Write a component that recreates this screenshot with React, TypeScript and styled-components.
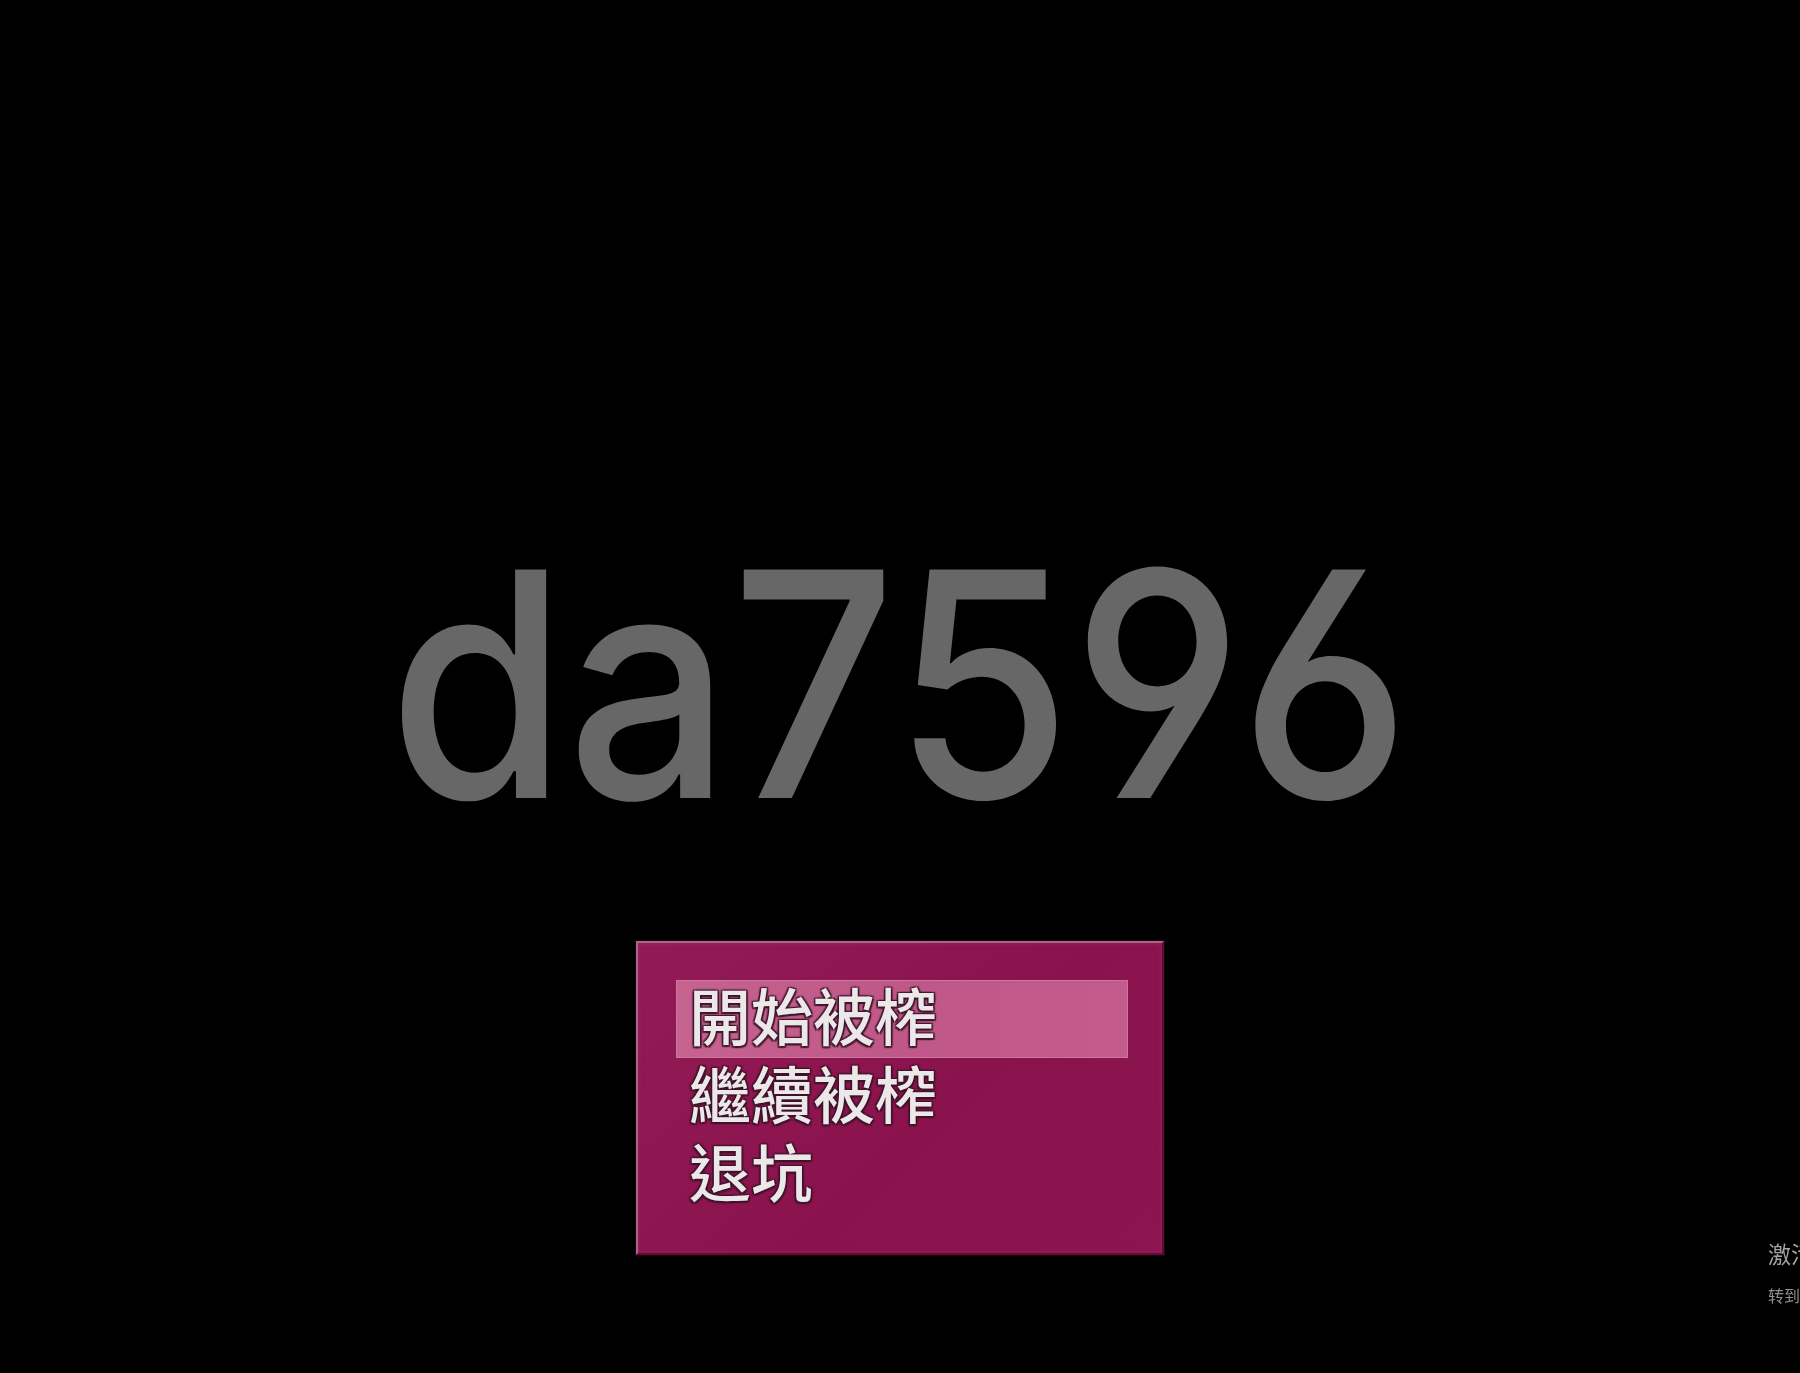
import React from "react";
import styled, { createGlobalStyle } from "styled-components";

const Global = createGlobalStyle`
  html, body {
    margin: 0;
    padding: 0;
    background: #000;
    overflow: hidden;
  }
  #root {
    min-height: 1373px;
  }
`;

const Screen = styled.main`
  min-height: 1373px;
  display: flex;
  flex-direction: column;
  align-items: center;
  padding-top: 527px;
  box-sizing: border-box;
  background: #000;
`;

const Title = styled.h1`
  margin: 0;
  font-family: Inter, "Liberation Sans", sans-serif;
  font-feature-settings: "cv03", "cv04";
  font-weight: 500;
  font-size: 314px;
  line-height: 1;
  letter-spacing: 0;
  color: #676767;
  transform: scaleX(0.92);
`;

const Window = styled.nav`
  margin-top: 100px;
  width: 528px;
  height: 314px;
  box-sizing: border-box;
  padding: 37px 34px 39px 38px;
  background: linear-gradient(135deg, #931a56 0%, #8a134d 55%, #8c1450 100%);
  border-style: solid;
  border-width: 2px;
  border-color: #a8668a #5e0d33 #5e0d33 #a8668a;
  box-shadow: 0 0 0 1px #1c030c, 2px 2px 8px 2px rgba(0, 0, 0, 0.95),
    inset 0 0 5px rgba(170, 50, 110, 0.5);
`;

const List = styled.ul`
  list-style: none;
  margin: 0;
  padding: 0;
  display: flex;
  flex-direction: column;
`;

const Item = styled.li<{ $active?: boolean }>`
  height: 78px;
  box-sizing: border-box;
  display: flex;
  align-items: center;
  padding: 0 0 10px 12px;
  background: ${(p) =>
    p.$active
      ? "linear-gradient(90deg, #c6638f 0%, #bf5888 50%, #c35c8c 100%)"
      : "transparent"};
  border: ${(p) => (p.$active ? "1px solid #cc779d" : "1px solid transparent")};
  font-family: "Noto Sans CJK TC", "Noto Sans CJK SC", sans-serif;
  font-size: 62px;
  font-weight: 500;
  line-height: 1;
  color: #ece8ea;
  text-shadow: -1.5px -1.5px 1px rgba(60, 20, 40, 0.8),
    1.5px -1.5px 1px rgba(60, 20, 40, 0.8),
    -1.5px 1.5px 1px rgba(60, 20, 40, 0.8),
    1.5px 1.5px 1px rgba(60, 20, 40, 0.8), 0 0 3px rgba(50, 10, 30, 0.7);
`;

const Watermark = styled.aside`
  position: fixed;
  left: 1768px;
  top: 1238px;
  white-space: nowrap;
  font-family: "Noto Sans CJK SC", sans-serif;
  color: #a3a3a3;
`;

const WmTitle = styled.div`
  font-size: 23px;
  line-height: 30px;
`;

const WmSub = styled.div`
  font-size: 16px;
  line-height: 24px;
  margin-top: 15px;
  color: #8f8f8f;
`;

const items = ["開始被榨", "繼續被榨", "退坑"];

export default function App() {
  return (
    <>
      <Global />
      <Screen>
        <Title>da7596</Title>
        <Window>
          <List>
            {items.map((t, i) => (
              <Item key={t} $active={i === 0}>
                {t}
              </Item>
            ))}
          </List>
        </Window>
      </Screen>
      <Watermark>
        <WmTitle>激活 Windows</WmTitle>
        <WmSub>转到“设置”以激活 Windows。</WmSub>
      </Watermark>
    </>
  );
}
